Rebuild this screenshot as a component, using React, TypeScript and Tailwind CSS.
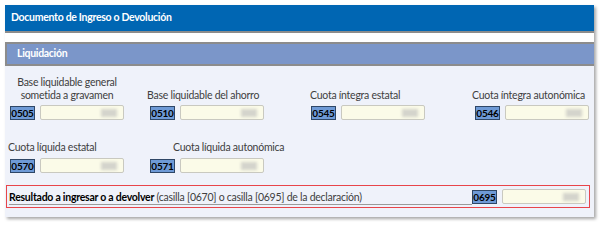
import React from "react";

const Code = ({ code }: { code: string }) => (
  <div className="w-[25px] h-[14px] bg-[#6e9ad6] border border-[#2f4766] text-[10px] leading-[12px] font-bold text-black flex items-center justify-center shrink-0 tracking-[-0.2px]">
    {code}
  </div>
);

const Input = () => (
  <div className="relative w-[84px] h-[15px] bg-[#fbfbe8] border border-[#c9c9c0] rounded-[2px] ml-[5px] shrink-0">
    <div className="absolute right-[6px] top-[3px] w-[16px] h-[8px] bg-[#d4d4cc] blur-[1.5px]" />
  </div>
);

const Field = ({ code }: { code: string }) => (
  <div className="flex items-center">
    <Code code={code} />
    <Input />
  </div>
);

export default function App() {
  return (
    <div
      className="w-[600px] h-[222px] bg-white pt-[5px] pl-[5px] overflow-hidden"
      style={{ fontFamily: 'Lato, "Noto Sans", sans-serif' }}
    >
      <div className="w-[589px] h-[212px] bg-[#eff2fa] shadow-[2px_2px_3px_rgba(0,0,0,0.35)] flex flex-col">
        <div className="h-[28px] bg-[#0066b3] border-b-2 border-[#8c8c8c] flex items-center pl-[6px] text-white font-bold text-[10.5px] tracking-[-0.3px]">
          Documento de Ingreso o Devolución
        </div>
        <div className="h-[9px] bg-white" />
        <div className="h-[24px] bg-[#7b96c9] border-y-2 border-l-2 border-[#8c8c8c] flex items-center pl-[10px] text-white font-bold text-[10.5px] tracking-[-0.3px]">
          Liquidación
        </div>
        <div className="flex items-end pl-[5px] pt-[10px] text-[10.5px] leading-[13px] tracking-[-0.25px] text-[#404040]">
          <div className="w-[140px] flex flex-col">
            <div className="w-[114px] text-center mb-[3px] whitespace-nowrap">
              Base liquidable general
              <br />
              sometida a gravamen
            </div>
            <Field code="0505" />
          </div>
          <div className="w-[161px] flex flex-col">
            <div className="-ml-[3px] mb-[3px] whitespace-nowrap">Base liquidable del ahorro</div>
            <Field code="0510" />
          </div>
          <div className="w-[164px] flex flex-col">
            <div className="-ml-[1px] mb-[3px] whitespace-nowrap">Cuota íntegra estatal</div>
            <Field code="0545" />
          </div>
          <div className="flex flex-col">
            <div className="-ml-[3px] mb-[3px] whitespace-nowrap">Cuota íntegra autonómica</div>
            <Field code="0546" />
          </div>
        </div>
        <div className="flex items-end pl-[5px] pt-[20px] text-[10.5px] leading-[14px] tracking-[-0.25px] text-[#404040]">
          <div className="w-[140px] flex flex-col">
            <div className="-ml-[2px] mb-[4px] whitespace-nowrap">Cuota líquida estatal</div>
            <Field code="0570" />
          </div>
          <div className="w-[161px] flex flex-col">
            <div className="ml-[23px] mb-[4px] whitespace-nowrap">Cuota líquida autonómica</div>
            <Field code="0571" />
          </div>
        </div>
        <div className="mt-[12px] ml-[1px] mr-[4px] h-[23px] border border-[#e8454a] flex items-center pl-[2px] pr-[3px]">
          <div className="flex-1 min-w-0 overflow-hidden border-b border-[#9a9a9a] text-[10.5px] leading-[13px] tracking-[-0.25px] text-[#404040] whitespace-nowrap mt-[3px]">
            <span className="font-bold text-black">Resultado a ingresar o a devolver</span>{" "}
            (casilla [0670] o casilla [0695] de la declaración)
          </div>
          <div className="flex items-center">
            <Code code="0695" />
            <Input />
          </div>
        </div>
      </div>
    </div>
  );
}
